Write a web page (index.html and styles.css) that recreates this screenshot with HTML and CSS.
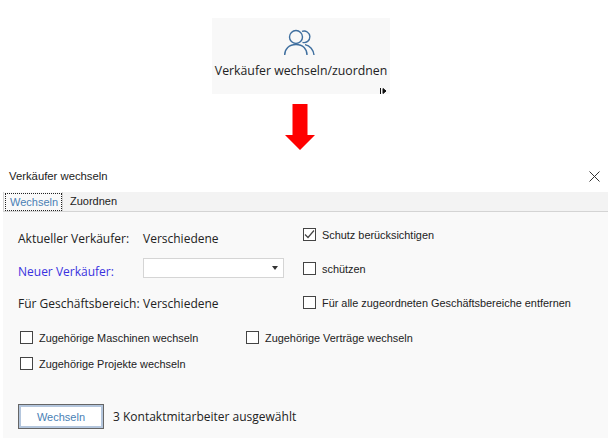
FILE: index.html
```html
<!DOCTYPE html>
<html lang="de">
<head>
<meta charset="utf-8">
<title>Verkäufer wechseln</title>
<link rel="stylesheet" href="styles.css">
</head>
<body>
<div class="top">
  <div class="ribbon">
    <svg class="people" width="31" height="27" viewBox="0 0 31 27" fill="none" stroke="#3f6f9f" stroke-width="1.4">
      <circle cx="12" cy="8" r="6.5"/>
      <path d="M18 2.400a5.800 5.800 0 1 1 .5 11"/>
      <path d="M.7 26C.7 20 5 15.500 12 15.500S23 20 23 26"/>
      <path d="M21 15.600C26 16.500 29.500 21 30 26"/>
    </svg>
    <div class="ribbon-label">Verkäufer wechseln/zuordnen</div>
    <svg class="cursor" width="7" height="6" viewBox="0 0 7 6"><path d="M.5 0v6M3 .5l3 2.500-3 2.500z" stroke="#111" stroke-width="1" fill="#111"/></svg>
  </div>
  <div class="arrow-wrap">
    <svg width="30" height="46" viewBox="0 0 30 46"><path d="M7.500 0h15v31H30L15 46 0 31h7.500z" fill="#f00"/></svg>
  </div>
</div>
<div class="dialog">
  <div class="titlebar">
    <span>Verkäufer wechseln</span>
    <svg width="11" height="11" viewBox="0 0 11 11" stroke="#333" stroke-width="1"><path d="M.5.500l10 10M10.500.500l-10 10"/></svg>
  </div>
  <div class="tabs">
    <div class="tab active"><span>Wechseln</span></div>
    <div class="tab">Zuordnen</div>
  </div>
  <div class="panel">
    <div class="main-grid">
      <div class="fields">
        <div class="field"><label>Aktueller Verkäufer:</label><span>Verschiedene</span></div>
        <div class="field"><label class="blue">Neuer Verkäufer:</label><div class="combo"><i></i></div></div>
        <div class="field"><label>Für Geschäftsbereich:</label><span>Verschiedene</span></div>
      </div>
      <div class="checks">
        <div class="check"><span class="box"><svg width="11" height="9" viewBox="0 0 11 9" fill="none" stroke="#444" stroke-width="1.2"><path d="M1 4.500l3 3 6-7"/></svg></span>Schutz berücksichtigen</div>
        <div class="check"><span class="box"></span>schützen</div>
        <div class="check"><span class="box"></span>Für alle zugeordneten Geschäftsbereiche entfernen</div>
      </div>
    </div>
    <div class="related">
      <div class="check"><span class="box"></span>Zugehörige Maschinen wechseln</div>
      <div class="check"><span class="box"></span>Zugehörige Verträge wechseln</div>
      <div class="check"><span class="box"></span>Zugehörige Projekte wechseln</div>
    </div>
    <div class="footer">
      <button class="btn" type="button">Wechseln</button>
      <span>3 Kontaktmitarbeiter ausgewählt</span>
    </div>
  </div>
</div>
</body>
</html>
```
FILE: styles.css
```css
* { box-sizing: border-box; }
html, body { margin: 0; padding: 0; background: #fff; }
body { width: 612px; height: 443px; overflow: hidden; font-family: "Open Sans", "Liberation Sans", sans-serif; color: #222; }
.top { display: flex; flex-direction: column; align-items: center; padding: 18px 10px 0 0; height: 160px; }
.ribbon { position: relative; width: 178px; height: 76px; background: #f8f8f8; display: flex; flex-direction: column; align-items: center; padding-top: 11px; }
.people { display: block; margin-left: -3px; }
.ribbon-label { font-size: 12.300px; line-height: 18px; margin-top: 6px; white-space: nowrap; }
.cursor { position: absolute; right: 3px; bottom: 0; }
.arrow-wrap { margin-top: 10px; margin-left: -2px; }
.dialog { margin-left: 3px; width: 605px; }
.titlebar { height: 32px; padding: 0 8px 0 6px; display: flex; justify-content: space-between; align-items: center; font-family: "Liberation Sans", sans-serif; font-size: 11.300px; }
.tabs { height: 20px; background: #f3f3f3; border-bottom: 1px solid #d4d4d4; display: flex; font-family: "Liberation Sans", sans-serif; font-size: 11px; }
.tab { padding: 0 7px; line-height: 19px; height: 19px; }
.tab.active { color: #4a7fb5; padding: 0; border-left: 1px solid #d4d4d4; border-right: 1px solid #d4d4d4; background: #f9f9f9; }
.tab.active span { display: block; height: 18px; width: 57px; padding: 0 0 0 4px; border: 1px dotted #222; line-height: 17px; margin: 1px 0 0 1px; }
.panel { height: 226px; background: #f9f9f9; padding: 16px 0 0 15px; }
.main-grid { display: flex; gap: 19px; }
.fields { width: 266px; display: flex; flex-direction: column; gap: 11.500px; font-size: 12px; }
.field { display: flex; align-items: center; height: 21px; }
.field label { width: 125px; flex: none; }
.blue { color: #3a32e0; }
.combo { position: relative; width: 141px; height: 20px; margin-top: -6px; background: #fff; border: 1px solid #d5d5d5; }
.combo i { position: absolute; right: 5px; top: 7px; border: 3px solid transparent; border-top: 4px solid #333; border-bottom: 0; }
.checks { display: flex; flex-direction: column; gap: 21px; }
.check { display: flex; align-items: center; height: 13px; font-family: "Liberation Sans", sans-serif; font-size: 10.900px; white-space: nowrap; }
.box { width: 13px; height: 13px; border: 1px solid #444; background: #fff; margin-right: 6px; flex: none; display: flex; align-items: center; justify-content: center; }
.related { display: grid; grid-template-columns: 226px auto; row-gap: 13px; margin: 17px 0 0 2px; }
.footer { display: flex; align-items: center; gap: 9px; margin-top: 34px; font-size: 12px; }
.btn { width: 86px; height: 25px; background: #fff; border: 3px solid #b4c6dd; outline: 1px solid #666; outline-offset: -1px; color: #4a7fb5; font-family: "Liberation Sans", sans-serif; font-size: 11px; padding: 0; }
```
